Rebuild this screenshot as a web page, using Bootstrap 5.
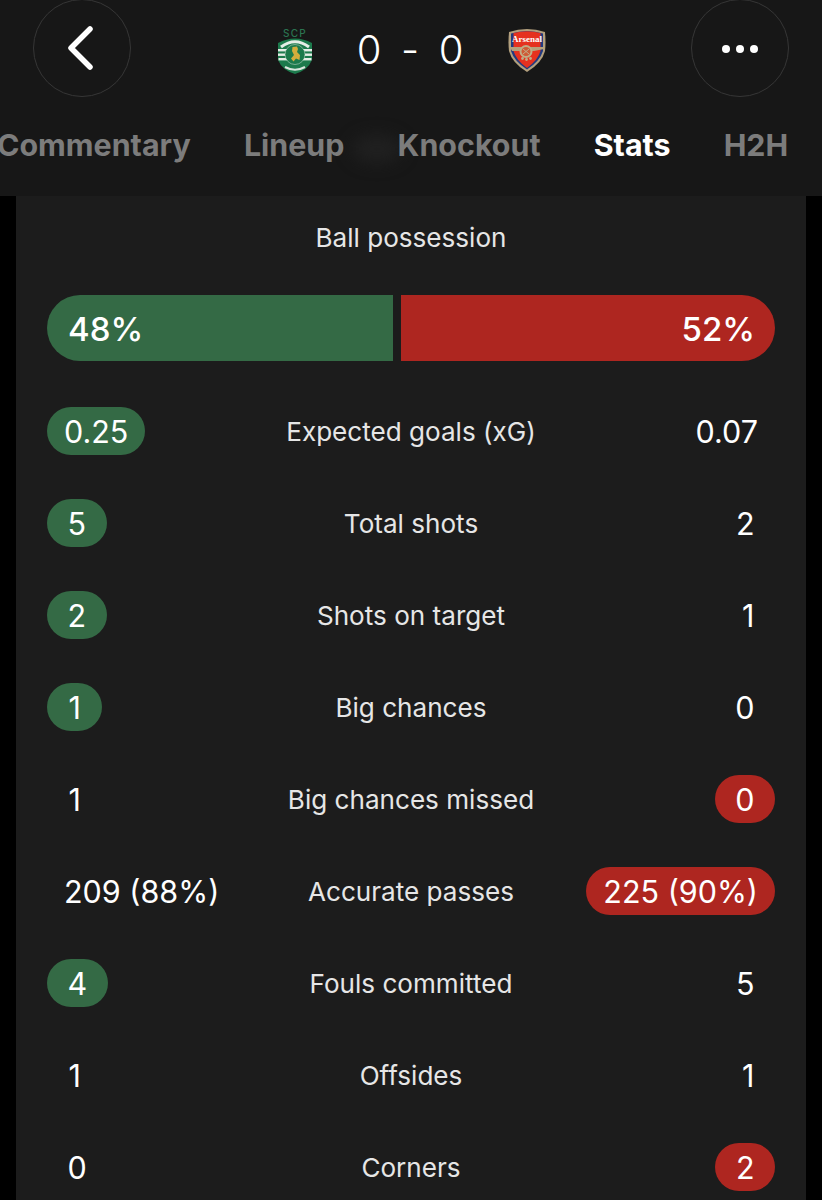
<!doctype html>
<html lang="en"><head><meta charset="utf-8"><title>Match stats</title>
<link href="https://cdn.jsdelivr.net/npm/bootstrap@5.3.0/dist/css/bootstrap.min.css" rel="stylesheet">
<style>
html,body{height:1200px;overflow:hidden;background:#000;}
body{font-family:Inter,"Liberation Sans",sans-serif;color:#fff;}
.top-head{background:#171717;height:196px;position:relative;overflow:hidden;}
.head-row{height:97px;padding:0 33px;}
.circle-btn{width:98px;height:98px;border:1.5px solid #363636;border-radius:50%;background:transparent;padding:0;margin-top:-1px;}
.back-ico{margin-right:3px;}
.crest-a{width:36px;height:46px;margin-top:4px;}
.crest-b{width:38px;height:45px;margin-top:2px;}
.score-text{font-size:40px;font-weight:300;width:195px;line-height:1;margin-top:2px;}
.score-text span{display:inline-block;width:41px;text-align:center;}
.tab-strip{height:99px;padding-top:28px;margin-left:-3px;gap:53.2px;white-space:nowrap;font-size:30.4px;font-weight:700;line-height:40px;color:#7c7c7c;position:relative;z-index:1;}
.tab-on{color:#fff;}
.smudge{position:absolute;left:352px;top:135px;width:50px;height:28px;border-radius:50%;background:#202020;filter:blur(8px);}
.stat-card{background:#1c1c1c;margin:0 16px;height:1004px;padding:0 31px;overflow:hidden;}
.stat-name{font-size:26.1px;line-height:32px;color:#e6e6e6;}
.first-name{padding-top:26px;height:99px;}
.poss-bar{height:66px;gap:8px;font-size:33px;font-weight:500;line-height:68px;}
.poss-left{width:346px;background:#346a45;border-radius:33px 0 0 33px;padding-left:21px;}
.poss-right{flex:1;background:#ae2620;border-radius:0 33px 33px 0;padding-right:20px;text-align:right;}
.stat-row{height:92px;position:relative;}
.rows-wrap{padding-top:24px;}
.stat-val{font-size:30.5px;line-height:50px;height:48px;padding:0 17px;border-radius:24px;white-space:nowrap;}
.stat-val.digit{padding:0 21.5px;}
.stat-val.digit-w{padding:0 20.5px;}
.hl-green{background:#346a45;}
.hl-red{background:#ae2620;}
.stat-label{position:absolute;left:0;right:0;text-align:center;margin-top:1px;}
</style></head>
<body>
<header class="top-head">
  <div class="smudge"></div>
  <div class="head-row d-flex align-items-center justify-content-between">
    <button class="circle-btn d-flex align-items-center justify-content-center" aria-label="Back">
      <svg class="back-ico" width="34" height="48" viewBox="0 0 34 48"><path d="M26 5 L7 24 L26 43" fill="none" stroke="#fff" stroke-width="5.5" stroke-linecap="round" stroke-linejoin="round"/></svg>
    </button>
    <div class="d-flex align-items-center">
      <svg class="crest-a" viewBox="0 0 36 46">
        <text x="18" y="8.5" text-anchor="middle" font-family="Inter,sans-serif" font-weight="500" font-size="10" fill="#2b7350" letter-spacing="1.2">SCP</text>
        <path d="M1 15 Q18 6 35 15 L35 32 Q31 42 18 46 Q5 42 1 32Z" fill="#1c7a4c"/>
        <g fill="#e4ede6"><rect x="1" y="21" width="34" height="2.4"/><rect x="1" y="25.5" width="34" height="2.4"/><rect x="1.5" y="30" width="33" height="2.4"/></g>
        <circle cx="18" cy="26.5" r="10" fill="#1c7a4c" stroke="#cfe0d4" stroke-width=".5"/>
        <path d="M15.5 19 L20 18.5 L21 21 L20 24 L23 27 L22.5 32 L19 30.5 L16.5 33.5 L14 30.5 L17 27 L15 23Z" fill="#d3ad3c"/>
        <path d="M4 19 Q18 8.5 32 19" fill="none" stroke="#e4ede6" stroke-width="3"/>
        <path d="M8 39 Q18 44.5 28 39" fill="none" stroke="#d9e6dd" stroke-width="2"/>
      </svg>
      <div class="score-text d-flex justify-content-center"><span>0</span><span>-</span><span>0</span></div>
      <svg class="crest-b" viewBox="0 0 38 45">
        <path d="M1 5 Q19 -1 37 5 Q38 16 37 24 Q34 36 19 45 Q4 36 1 24 Q0 16 1 5Z" fill="#b29f7d"/>
        <path d="M3 6.5 Q19 1.5 35 6.5 L35 24 Q32 34 19 42.5 Q6 34 3 24Z" fill="#203a80"/>
        <path d="M5.5 6 Q19 2.5 32.5 6 L32.5 24 Q30 33 19 41 Q8 33 5.5 24Z" fill="#e5311f"/>
        <text x="19" y="14.5" text-anchor="middle" font-family="Liberation Serif,serif" font-weight="700" font-size="9" fill="#fff">Arsenal</text>
        <path d="M2 20 L36 20 L36 22 L26 24 L12 24 L4 24Z" fill="#b5a27c"/>
        <circle cx="18" cy="24.5" r="5.5" fill="#cf5a36" stroke="#c0ad86" stroke-width="2"/>
        <path d="M15 22 L21 27 M21 22 L15 27" stroke="#c0ad86" stroke-width="1"/>
        <circle cx="14.5" cy="31.5" r="1.4" fill="#c0ad86"/><circle cx="18.5" cy="32.5" r="1.4" fill="#c0ad86"/><circle cx="22.5" cy="31.5" r="1.4" fill="#c0ad86"/>
      </svg>
    </div>
    <button class="circle-btn d-flex align-items-center justify-content-center" aria-label="More">
      <svg width="38" height="12" viewBox="0 0 38 12"><g fill="#fff"><circle cx="5" cy="7" r="4"/><circle cx="19" cy="7" r="4"/><circle cx="33" cy="7" r="4"/></g></svg>
    </button>
  </div>
  <nav class="tab-strip d-flex">
    <span>Commentary</span><span>Lineup</span><span>Knockout</span><span class="tab-on">Stats</span><span>H2H</span>
  </nav>
</header>
<main class="stat-card">
  <div class="stat-name first-name text-center">Ball possession</div>
  <div class="poss-bar d-flex"><div class="poss-left">48%</div><div class="poss-right">52%</div></div>
  <div class="rows-wrap">
    <div class="stat-row d-flex align-items-center justify-content-between"><span class="stat-name stat-label">Expected goals (xG)</span><span class="stat-val hl-green">0.25</span><span class="stat-val">0.07</span></div>
    <div class="stat-row d-flex align-items-center justify-content-between"><span class="stat-name stat-label">Total shots</span><span class="stat-val digit-w hl-green">5</span><span class="stat-val digit-w">2</span></div>
    <div class="stat-row d-flex align-items-center justify-content-between"><span class="stat-name stat-label">Shots on target</span><span class="stat-val digit-w hl-green">2</span><span class="stat-val digit-w">1</span></div>
    <div class="stat-row d-flex align-items-center justify-content-between"><span class="stat-name stat-label">Big chances</span><span class="stat-val digit hl-green">1</span><span class="stat-val digit-w">0</span></div>
    <div class="stat-row d-flex align-items-center justify-content-between"><span class="stat-name stat-label">Big chances missed</span><span class="stat-val digit">1</span><span class="stat-val digit-w hl-red">0</span></div>
    <div class="stat-row d-flex align-items-center justify-content-between"><span class="stat-name stat-label">Accurate passes</span><span class="stat-val">209 (88%)</span><span class="stat-val hl-red">225 (90%)</span></div>
    <div class="stat-row d-flex align-items-center justify-content-between"><span class="stat-name stat-label">Fouls committed</span><span class="stat-val digit-w hl-green">4</span><span class="stat-val digit-w">5</span></div>
    <div class="stat-row d-flex align-items-center justify-content-between"><span class="stat-name stat-label">Offsides</span><span class="stat-val digit">1</span><span class="stat-val digit-w">1</span></div>
    <div class="stat-row d-flex align-items-center justify-content-between"><span class="stat-name stat-label">Corners</span><span class="stat-val digit-w">0</span><span class="stat-val digit-w hl-red">2</span></div>
  </div>
</main>
<script src="https://cdn.jsdelivr.net/npm/bootstrap@5.3.0/dist/js/bootstrap.bundle.min.js"></script>
</body></html>
